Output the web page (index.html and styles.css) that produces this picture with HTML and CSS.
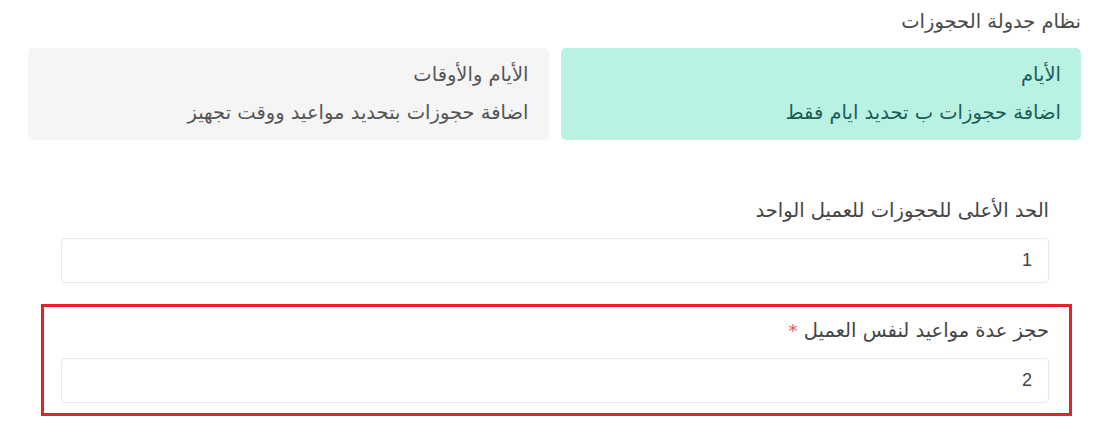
FILE: index.html
```html
<!DOCTYPE html>
<html lang="ar" dir="rtl">
<head>
<meta charset="utf-8">
<link rel="stylesheet" href="styles.css">
</head>
<body>
<div class="page">
  <div class="section-title">نظام جدولة الحجوزات</div>
  <div class="options">
    <div class="option active">
      <div class="option-title">الأيام</div>
      <div class="option-desc">اضافة حجوزات ب تحديد ايام فقط</div>
    </div>
    <div class="option">
      <div class="option-title">الأيام والأوقات</div>
      <div class="option-desc">اضافة حجوزات بتحديد مواعيد ووقت تجهيز</div>
    </div>
  </div>
  <div class="field first">
    <label class="field-label">الحد الأعلى للحجوزات للعميل الواحد</label>
    <div class="input">1</div>
  </div>
  <div class="field highlight">
    <label class="field-label">حجز عدة مواعيد لنفس العميل <span class="req">*</span></label>
    <div class="input">2</div>
  </div>
</div>
</body>
</html>
```
FILE: styles.css
```css
html, body {
  margin: 0;
  padding: 0;
  background: #ffffff;
}
body {
  font-family: "DejaVu Sans", sans-serif;
  font-size: 19.5px;
  color: #444;
}
.page {
  padding: 10px 15px 0 28px;
}
.section-title {
  line-height: 24px;
  color: #4a4a4a;
  margin-bottom: 14px;
}
.options {
  display: flex;
  gap: 12px;
}
.option {
  flex: 1;
  height: 92px;
  box-sizing: border-box;
  padding: 13px 20px;
  border-radius: 5px;
  background: #f5f5f5;
  color: #555;
  display: flex;
  flex-direction: column;
  gap: 10px;
}
.option.active {
  background: #b9f1e3;
  color: #1c5d5a;
}
.option-title, .option-desc {
  line-height: 28px;
}
.field {
  border: 3px solid transparent;
  padding: 10px 20px 10px 17px;
  margin: 0 9px 0 13px;
  display: flex;
  flex-direction: column;
  gap: 13px;
}
.field.first {
  margin-top: 44px;
  margin-bottom: 8px;
}
.field.highlight {
  border-color: #e3222b;
}
.field-label {
  line-height: 28px;
  color: #444;
}
.req {
  color: #f0505a;
  font-size: 18px;
}
.input {
  height: 45px;
  box-sizing: border-box;
  border: 1px solid #e8e8e8;
  border-radius: 4px;
  padding: 0 16px;
  display: flex;
  align-items: center;
  color: #444;
  font-family: "Liberation Sans", sans-serif;
  font-size: 18px;
}
```
